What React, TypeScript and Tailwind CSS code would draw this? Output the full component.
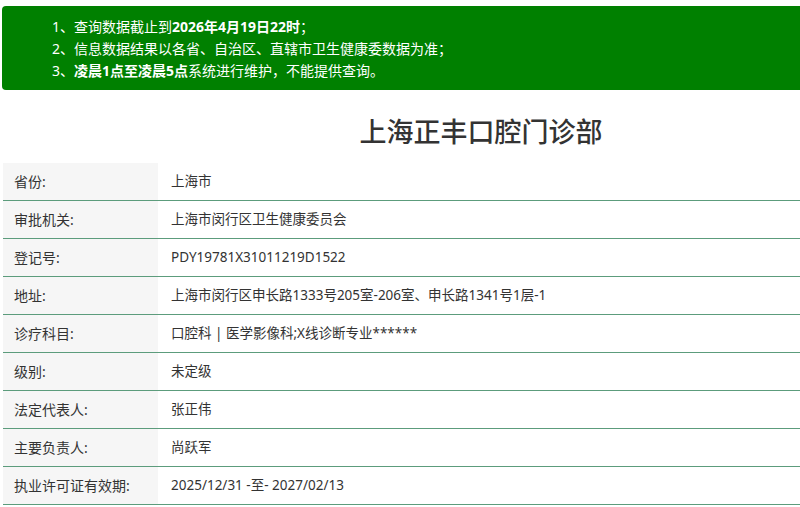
const rows: [string, string][] = [
  ["省份:", "上海市"],
  ["审批机关:", "上海市闵行区卫生健康委员会"],
  ["登记号:", "PDY19781X31011219D1522"],
  ["地址:", "上海市闵行区申长路1333号205室-206室、申长路1341号1层-1"],
  ["诊疗科目:", "口腔科 | 医学影像科;X线诊断专业******"],
  ["级别:", "未定级"],
  ["法定代表人:", "张正伟"],
  ["主要负责人:", "尚跃军"],
  ["执业许可证有效期:", "2025/12/31 -至- 2027/02/13"],
];

const App = () => {
  return (
    <div className="w-[800px] h-[507px] overflow-hidden bg-white text-[#333] font-['Noto_Sans','Noto_Sans_CJK_SC',sans-serif]">
      <div className="pt-[6px] pl-[2px]">
        <ol className="bg-[#008000] rounded-l-[4px] text-white text-[14px] leading-[22px] pt-[10px] pb-[8px] pl-[50px] font-normal">
          <li>
            1、查询数据截止到<b className="font-bold">2026年4月19日22时</b>；
          </li>
          <li>2、信息数据结果以各省、自治区、直辖市卫生健康委数据为准；</li>
          <li>
            3、<b className="font-bold">凌晨1点至凌晨5点</b>系统进行维护，不能提供查询。
          </li>
        </ol>
      </div>

      <h1 className="pl-[162px] pt-[23px] pb-[13px] text-center text-[27px] leading-[37px] font-medium text-[#333]">
        上海正丰口腔门诊部
      </h1>

      <div className="pl-[3px]">
        {rows.map(([label, value]) => (
          <div key={label} className="flex h-[38px] border-b border-[#5c9c7c] text-[14px]">
            <div className="w-[155px] shrink-0 bg-[#f6f6f6] pl-[11px] flex items-center">{label}</div>
            <div className="pl-[13px] flex items-center text-[13.5px]">{value}</div>
          </div>
        ))}
      </div>
    </div>
  );
};

export default App;
